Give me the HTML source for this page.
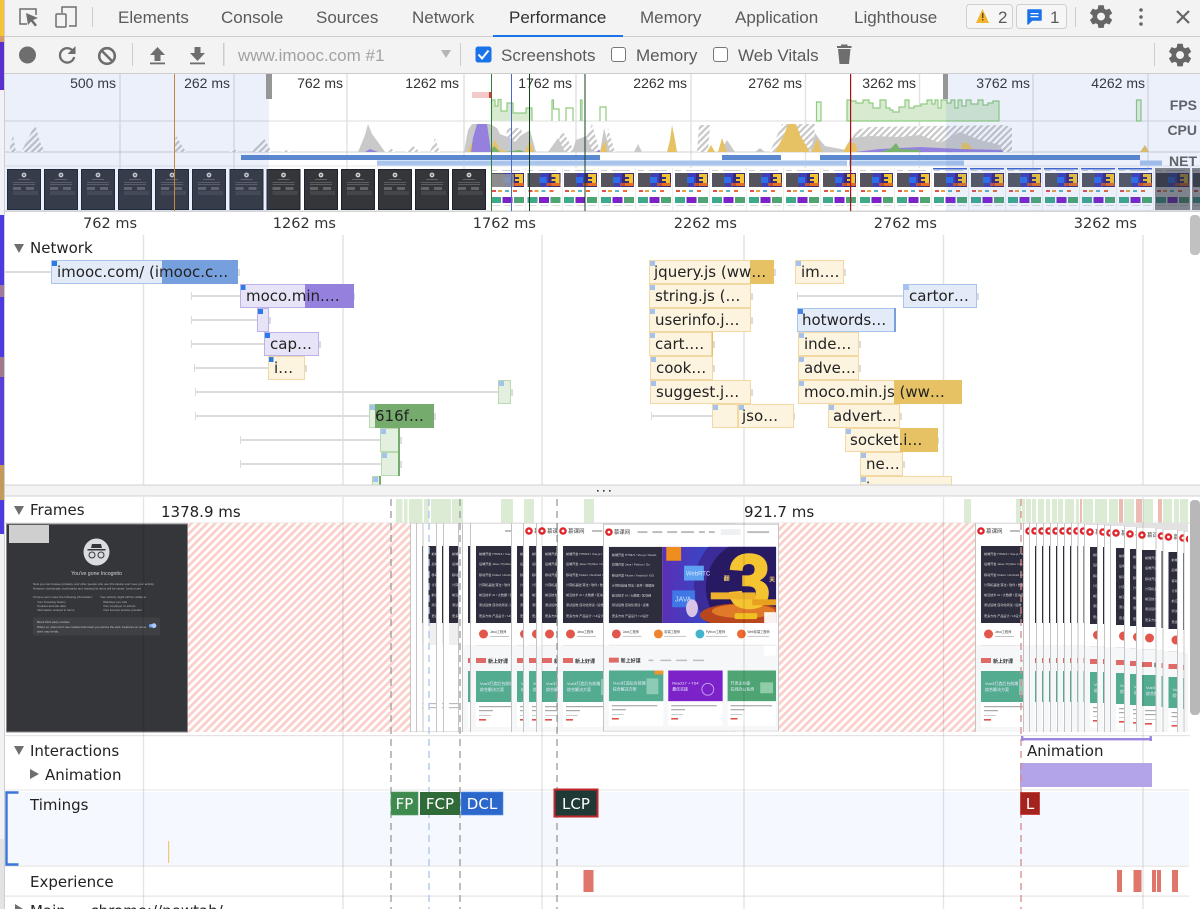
<!DOCTYPE html>
<html><head><meta charset="utf-8"><title>DevTools Performance</title>
<style>
html,body{margin:0;padding:0;background:#fff;width:1200px;height:909px;overflow:hidden}
svg{display:block}
#root{filter:blur(.35px)}
.t{font-family:"Liberation Sans","Noto Sans CJK SC",sans-serif;font-size:17px;fill:#5a5a5a}
.o{font-family:"Liberation Sans",sans-serif;font-size:14px;fill:#333;text-anchor:end}
.l{font-family:"DejaVu Sans","Noto Sans CJK SC",sans-serif;font-size:15px;fill:#222}
.r{font-family:"DejaVu Sans",sans-serif;font-size:14.5px;fill:#333;text-anchor:end}
.m{font-family:"DejaVu Sans",sans-serif;font-size:15px;fill:#fff;text-anchor:middle}
.lbl{font-family:"Liberation Sans",sans-serif;font-size:14px;font-weight:bold;fill:#5f6368;text-anchor:end}
.z{font-family:"Liberation Sans","Noto Sans CJK SC",sans-serif}
.w{fill:#dcdcdc}
.y{fill:#fdf4e0;stroke:#f2d9a4}
.yd{fill:#e6c264}
.g{fill:#e3efdf;stroke:#bad8b1}
.gd{fill:#75ab6c}
.b{fill:#e4ebf8;stroke:#a9c5ee}
.bd{fill:#769fdd}
.p{fill:#e8e4f7;stroke:#bdb0eb}
.pd{fill:#9580dd}
.mk{fill:#a3c2ee}
.mk2{fill:#2b7be6}
.gl{stroke:#e2e2e2;stroke-width:1.4}
.gk{stroke:#000;stroke-opacity:.1;stroke-width:1.4}
</style></head>
<body>
<svg id="root" xmlns="http://www.w3.org/2000/svg" width="1200" height="909" viewBox="0 0 1200 909">
<defs>
<pattern id="hr" width="5.6" height="5.6" patternUnits="userSpaceOnUse" patternTransform="rotate(45)"><rect width="5.6" height="5.6" fill="#fff"/><rect width="2.8" height="5.6" fill="#fbcfca"/></pattern>
<pattern id="hg" width="4.6" height="4.6" patternUnits="userSpaceOnUse" patternTransform="rotate(45)"><rect width="4.6" height="4.6" fill="#fff"/><rect width="2.3" height="4.6" fill="#c9c9c9"/></pattern>
<linearGradient id="bn" x1="0" y1="0" x2="1" y2="0"><stop offset="0" stop-color="#5a2fb5"/><stop offset=".5" stop-color="#2f4ecb"/><stop offset="1" stop-color="#2f4ecb"/></linearGradient>
<clipPath id="bc"><rect x="60" y="23" width="115" height="77"/></clipPath>

<symbol id="pg" width="178" height="209" viewBox="0 0 178 209">
<rect x=".5" y="0" width="177" height="209" fill="#fff" stroke="#c4c4c4"/>
<rect x="1" y="122" width="176" height="87" fill="#f6f7f9"/>
<circle cx="6" cy="8" r="3.8" fill="#e0262c"/><circle cx="6" cy="8" r="1.4" fill="#fff"/>
<text x="11" y="10" class="z" font-size="5.5" fill="#444">慕课网</text>
<g fill="#bdbdbd"><rect x="35" y="7" width="10" height="2"/><rect x="50" y="7" width="10" height="2"/><rect x="65" y="7" width="10" height="2"/><rect x="79" y="7" width="13" height="2"/><rect x="97" y="7" width="6" height="2"/><rect x="107" y="7" width="6" height="2"/><rect x="119" y="5" width="20" height="6" fill="#eef0f3"/><rect x="146" y="7" width="22" height="2"/></g>
<rect x="6" y="23" width="54" height="77" fill="#2e2d3d"/>
<g class="z" font-size="3.1" fill="#d8d8d8"><text x="9" y="32">前端开发 HTML5 / Vue.js / React</text><text x="9" y="42">后端开发 Java / Python / Go</text><text x="9" y="53">移动开发 Flutter / Android / iOS</text><text x="9" y="63">计算机基础 算法 / 软件 / 数据库</text><text x="9" y="73">前沿技术 AI / 大数据 / 区块链</text><text x="9" y="83">测试运维 自动化测试 / 运维</text><text x="9" y="94">更多方向 产品设计 / UI设计</text></g>
<rect x="60" y="23" width="115" height="77" fill="url(#bn)"/>
<g clip-path="url(#bc)">
<circle cx="152" cy="62" r="60" fill="#3c2c99"/><circle cx="152" cy="64" r="48" fill="#271a62"/>
<rect x="70" y="67" width="23" height="17" fill="#3f78e6"/><rect x="82" y="42" width="20" height="15" fill="#5ea0f2"/>
<text x="84" y="52" class="z" font-size="6" fill="#cfe3ff">WebRTC</text><text x="73" y="78" class="z" font-size="7" fill="#cfe3ff">JAVA</text>
<ellipse cx="142" cy="92" rx="44" ry="12" fill="#b8471e"/><ellipse cx="142" cy="88" rx="32" ry="7" fill="#e07a28"/>
<text x="148" y="84" text-anchor="middle" class="z" font-size="76" font-weight="bold" fill="#f5c431" stroke="#f5c431" stroke-width="2.5">3</text>
<text x="122" y="57" class="z" font-size="6" font-weight="bold" fill="#f7d36a">翻</text><text x="168" y="58" class="z" font-size="6" font-weight="bold" fill="#f7d36a">天</text>
<rect x="109" y="69" width="45" height="7" fill="#efb02c"/>
<rect x="151" y="76" width="24" height="6" fill="#e8a020"/>
<rect x="133" y="90" width="23" height="6" rx="2" fill="#f0c020"/>
<ellipse cx="90" cy="85" rx="6" ry="9" fill="#d9c4e8"/>
<rect x="64" y="23" width="15" height="14" fill="#ef8e1e"/>
</g>
<rect x="163" y="89" width="12" height="44" fill="#fff" opacity=".92"/>
<rect x="6" y="100" width="169" height="22" fill="#fff"/><rect x="6" y="122" width="169" height=".8" fill="#e3e3e3"/>
<circle cx="13.5" cy="111" r="4.5" fill="#e2574c"/><circle cx="56" cy="111" r="4.5" fill="#ee8432"/><circle cx="98" cy="111" r="4.5" fill="#43b5cb"/><circle cx="140" cy="111" r="4.5" fill="#ee6a32"/>
<g class="z" font-size="3.2" fill="#444"><text x="20" y="110">Java工程师</text><text x="62" y="110">前端工程师</text><text x="104" y="110">Python工程师</text><text x="146" y="110">Web前端工程师</text></g>
<g fill="#c4c4c4"><rect x="20" y="113" width="19" height="1"/><rect x="62" y="113" width="22" height="1"/><rect x="104" y="113" width="22" height="1"/><rect x="146" y="113" width="22" height="1"/></g>
<rect x="6" y="135" width="10" height="5" fill="#de6b68"/><text x="18" y="140" class="z" font-size="5" font-weight="bold" fill="#333">新上好课</text>
<g fill="#bcbcbc"><rect x="46" y="137" width="5" height="1.5"/><rect x="58" y="137" width="11" height="1.5"/><rect x="74" y="137" width="11" height="1.5"/><rect x="91" y="137" width="11" height="1.5"/></g>
<rect x="6" y="148" width="55" height="56" fill="#fff"/><rect x="66" y="148" width="55" height="56" fill="#fff"/><rect x="126" y="148" width="49" height="56" fill="#fff"/>
<rect x="6" y="148" width="55" height="31" fill="#53ab90"/><rect x="66" y="148" width="55" height="31" fill="#7b22c9"/><rect x="126" y="148" width="49" height="31" fill="#4ea573"/>
<rect x="52" y="148" width="9" height="4" fill="#ee9632"/>
<g class="z" font-size="4" fill="#eef"><text x="10" y="162">Vue3打造后台前端</text><text x="10" y="168">综合解决方案</text><text x="70" y="162">React17 + TS4</text><text x="70" y="168">最佳实践</text><text x="129" y="162">开发企业级</text><text x="129" y="168">在线办公系统</text></g>
<rect x="44" y="156" width="12" height="16" fill="#8cccb6"/><circle cx="106" cy="167" r="6" fill="none" stroke="#c89bee"/><rect x="159" y="160" width="13" height="11" fill="#90cca8"/>
<g fill="#a9a9a9"><rect x="9" y="183" width="46" height="1.2"/><rect x="9" y="187" width="14" height="1.2"/><rect x="69" y="183" width="46" height="1.2"/><rect x="69" y="187" width="14" height="1.2"/><rect x="129" y="183" width="42" height="1.2"/><rect x="129" y="187" width="14" height="1.2"/><rect x="9" y="192" width="12" height="1" fill="#ccc"/><rect x="69" y="192" width="12" height="1" fill="#ccc"/><rect x="129" y="192" width="12" height="1" fill="#ccc"/></g>
<g fill="#e0514a"><rect x="9" y="196" width="7" height="1.6"/><rect x="69" y="196" width="7" height="1.6"/><rect x="129" y="196" width="7" height="1.6"/></g>
</symbol>

<symbol id="pg0" width="178" height="209" viewBox="0 0 178 209">
<rect x=".5" y="0" width="177" height="209" fill="#fff" stroke="#c4c4c4"/>
<rect x="6" y="23" width="54" height="77" fill="#2e2d3d"/>
<g class="z" font-size="3.1" fill="#d8d8d8"><text x="9" y="32">前端开发</text><text x="9" y="42">后端开发</text><text x="9" y="53">移动开发</text><text x="9" y="63">计算机基础</text><text x="9" y="73">前沿技术</text><text x="9" y="83">测试运维</text><text x="9" y="94">更多方向</text></g>
<rect x="6" y="100" width="169" height="22" fill="#efefef"/>
<rect x="35" y="7" width="10" height="2" fill="#bdbdbd"/>
<rect x="6" y="180" width="30" height="1.200" fill="#bbb"/><rect x="6" y="184" width="30" height="1.200" fill="#bbb"/>
</symbol>

<symbol id="dt" width="34" height="41" viewBox="0 0 34 41">
<rect width="34" height="41" fill="#35363a"/><rect x=".5" y=".5" width="33" height="40" fill="none" stroke="#1d2230"/>
<circle cx="17" cy="6" r="2.4" fill="#cfcfcf"/><circle cx="17" cy="6" r=".9" fill="#444"/>
<g fill="#777"><rect x="11" y="10" width="12" height=".7"/><rect x="6" y="13" width="22" height=".6"/><rect x="6" y="15" width="22" height=".6"/><rect x="6" y="18" width="8" height="3" opacity=".7"/><rect x="19" y="18" width="8" height="3" opacity=".7"/></g><rect x="6" y="22" width="25" height="4" fill="#45464b"/>
</symbol>

<symbol id="th" width="36" height="42" viewBox="0 0 36 42">
<rect width="35.5" height="42" fill="#fff"/><rect x="35.5" width=".5" height="42" fill="#ddd"/>
<g fill="#cfcfcf"><rect x="1" y="2" width="6" height="1"/><rect x="12" y="2" width="18" height="1"/></g>
<rect x="1" y="5" width="13" height="14" fill="#55545e"/>
<rect x="14" y="5" width="20" height="14" fill="#3f3eb4"/><rect x="22" y="5" width="12" height="14" fill="#3a2a7c"/><rect x="13" y="9" width="7" height="6" fill="#2f6ee8"/>
<path d="M25 6h8v12h-8v-3h4v-2h-4v-2h4V9h-4z" fill="#f2c430"/><rect x="20" y="15" width="14" height="3" fill="#e05a20" opacity=".8"/>
<rect x="2" y="22" width="4" height="2" fill="#e0514a"/><rect x="8" y="22" width="4" height="2" fill="#e8a040"/><rect x="15" y="22" width="4" height="2" fill="#59b6c8"/><rect x="23" y="22" width="4" height="2" fill="#ea6a3c"/>
<rect x="1" y="29" width="10" height="6" fill="#3fa98c"/><rect x="12.5" y="29" width="10" height="6" fill="#7b22c9"/><rect x="24" y="29" width="10" height="6" fill="#4ea573"/>
<g fill="#ddd"><rect x="2" y="37" width="8" height="1"/><rect x="14" y="37" width="8" height="1"/><rect x="25" y="37" width="8" height="1"/></g>
</symbol>

<path id="gear" d="M19.43 12.98c.04-.32.07-.64.07-.98s-.03-.66-.07-.98l2.11-1.65c.19-.15.24-.42.12-.64l-2-3.46c-.12-.22-.39-.3-.61-.22l-2.49 1c-.52-.4-1.08-.73-1.69-.98l-.38-2.65C14.46 2.18 14.25 2 14 2h-4c-.25 0-.46.18-.49.42l-.38 2.65c-.61.25-1.17.59-1.69.98l-2.49-1c-.23-.09-.49 0-.61.22l-2 3.46c-.13.22-.07.49.12.64l2.11 1.65c-.04.32-.07.65-.07.98s.03.66.07.98l-2.11 1.65c-.19.15-.24.42-.12.64l2 3.46c.12.22.39.3.61.22l2.49-1c.52.4 1.08.73 1.69.98l.38 2.65c.03.24.24.42.49.42h4c.25 0 .46-.18.49-.42l.38-2.65c.61-.25 1.17-.59 1.69-.98l2.49 1c.23.09.49 0 .61-.22l2-3.46c.12-.22.07-.49-.12-.64l-2.11-1.65zM12 15.5c-1.93 0-3.5-1.57-3.5-3.5s1.57-3.5 3.5-3.5 3.5 1.57 3.5 3.5-1.57 3.5-3.5 3.5z"/>
</defs>

<rect width="1200" height="909" fill="#fff"/>

<!-- header tabs -->
<rect width="1200" height="37" fill="#f3f3f3"/><rect y="36" width="1200" height="1" fill="#ccc"/>
<g fill="none" stroke="#6e6e6e" stroke-width="1.5"><path d="M27 24h-7V9h16v6"/></g><path d="M26 13l12 5-5 2 4 5-2 1.5-4-5-3 3.5z" fill="#6e6e6e"/>
<g fill="none" stroke="#6e6e6e" stroke-width="1.5"><path d="M62 13V7h14v19H69"/><rect x="56" y="14" width="10" height="13" rx="1"/></g>
<rect x="92" y="7" width="1" height="20" fill="#ccc"/>
<text x="118" y="23" class="t">Elements</text><text x="221" y="23" class="t">Console</text><text x="316" y="23" class="t">Sources</text><text x="412" y="23" class="t">Network</text><text x="509" y="23" class="t" style="fill:#333">Performance</text><text x="640" y="23" class="t">Memory</text><text x="735" y="23" class="t">Application</text><text x="854" y="23" class="t">Lighthouse</text>
<rect x="493" y="35" width="130" height="2" fill="#1a73e8"/>
<rect x="966.500" y="4.500" width="46" height="24" rx="3" fill="#f6f6f6" stroke="#cfcfcf"/>
<path d="M982.500 9l6.500 14h-13z" fill="#f3b32a"/><rect x="982" y="13" width="1.400" height="5" fill="#5a4a1a"/><rect x="982" y="19" width="1.400" height="1.500" fill="#5a4a1a"/>
<text x="998" y="23" class="t">2</text>
<rect x="1016.500" y="4.500" width="50" height="24" rx="3" fill="#f6f6f6" stroke="#cfcfcf"/>
<path d="M1028 10h13v10h-9l-4 4z" fill="#1a73e8" stroke="#1a73e8" stroke-width="1.500" stroke-linejoin="round"/><rect x="1030.500" y="13" width="8" height="1.300" fill="#fff"/><rect x="1030.500" y="16" width="8" height="1.300" fill="#fff"/>
<text x="1050" y="23" class="t">1</text>
<rect x="1075" y="7" width="1" height="20" fill="#ccc"/>
<use href="#gear" transform="translate(1087.500,3) scale(1.130)" fill="#666"/>
<circle cx="1141" cy="10" r="1.800" fill="#666"/><circle cx="1141" cy="17" r="1.800" fill="#666"/><circle cx="1141" cy="24" r="1.800" fill="#666"/>
<path d="M1177 11l12 12M1189 11l-12 12" stroke="#666" stroke-width="2.200"/>

<!-- toolbar -->
<rect y="37" width="1200" height="36" fill="#f3f3f3"/><rect y="73" width="1200" height="1" fill="#ccc"/>
<circle cx="27.500" cy="55" r="8.500" fill="#6e6e6e"/>
<path d="M74 53a7.200 7.200 0 1 0 .2 4" fill="none" stroke="#6e6e6e" stroke-width="2.300"/><path d="M75.500 46v8h-8z" fill="#6e6e6e"/>
<circle cx="107" cy="56" r="7.800" fill="none" stroke="#6e6e6e" stroke-width="2.600"/><path d="M101.500 50.500l11 11" stroke="#6e6e6e" stroke-width="2.600"/>
<rect x="132" y="43" width="1" height="23" fill="#ccc"/>
<path d="M157.500 47l7.500 8h-4.500v6h-6v-6H150z" fill="#6e6e6e"/><rect x="150" y="62.500" width="15" height="1.800" fill="#6e6e6e"/>
<path d="M194.500 47h6v6h4.500l-7.500 8-7.500-8h4.500z" fill="#6e6e6e"/><rect x="190" y="62.500" width="15" height="1.800" fill="#6e6e6e"/>
<rect x="223" y="43" width="1.500" height="23" fill="#ccc"/>
<text x="238" y="61" class="t" style="fill:#a2a2a2">www.imooc.com #1</text>
<path d="M441 50h10l-5 8z" fill="#b5b5b5"/>
<rect x="460" y="43" width="1" height="23" fill="#ccc"/>
<rect x="475.500" y="46.500" width="16" height="16" rx="2.500" fill="#1a73e8"/><path d="M478.500 54.500l3.500 4 6.500-8" fill="none" stroke="#fff" stroke-width="2"/>
<text x="501" y="61" class="t">Screenshots</text>
<rect x="611.500" y="47.500" width="14" height="14" rx="2.500" fill="#fff" stroke="#777"/>
<text x="636" y="61" class="t">Memory</text>
<rect x="713.500" y="47.500" width="14" height="14" rx="2.500" fill="#fff" stroke="#777"/>
<text x="738" y="61" class="t">Web Vitals</text>
<path d="M838 49h12.500l-1.500 15h-9.500z" fill="#6e6e6e"/><rect x="837" y="46" width="14.500" height="2" fill="#6e6e6e"/><rect x="841" y="44.500" width="6.500" height="2" fill="#6e6e6e"/>
<rect x="1154" y="43" width="1" height="23" fill="#ccc"/>
<use href="#gear" transform="translate(1166.500,41.500) scale(1.130)" fill="#666"/>

<!-- overview -->
<rect x="5" y="74" width="1195" height="137" fill="#fff"/>
<g class="gl"><path d="M120 74V211M234 74V211M347 74V211M464 74V211M576 74V211M691 74V211M805.500 74V211M919.500 74V211M1033 74V211M1148 74V211"/></g>
<g class="o"><text x="116" y="88">500 ms</text><text x="230" y="88">262 ms</text><text x="343" y="88">762 ms</text><text x="459" y="88">1262 ms</text><text x="572" y="88">1762 ms</text><text x="687" y="88">2262 ms</text><text x="802" y="88">2762 ms</text><text x="916" y="88">3262 ms</text><text x="1030" y="88">3762 ms</text><text x="1145" y="88">4262 ms</text></g>
<rect x="472" y="92" width="18" height="6" fill="#f3c9c9"/><rect x="489" y="92" width="2" height="6" fill="#ee3030"/>
<rect x="5" y="120.500" width="1195" height="1" fill="#dcdcdc"/>
<rect x="5" y="151.500" width="1195" height="1" fill="#d0d0d0"/>
<rect x="5" y="165.500" width="1195" height="1" fill="#e8e8e8"/>
<!-- FPS -->
<path d="M491.500 121V100H495V106H498V99.500H501V111H507V103H513V113H525H526V108H532V121Z" fill="#d8ebd0"/>
<path d="M491.500 121V100H495V106H498V99.500H501V111H507V103H513V113H525H526V108H532V121" fill="none" stroke="#8fcb80" stroke-width="1.200"/>
<path d="M552 121V100H553.500V109H559V121M566 121V108H573V121M580.500 121V100H582V121M600 121V107H606V121" fill="#fff" stroke="#8fcb80" stroke-width="1.200"/>
<path d="M816.500 121V102H821V121Z" fill="#e8f3e3" stroke="#8fcb80" stroke-width="1.200"/>
<path d="M847 121V100H851V101H856V103H863V100H869V103H873V108H880V100H886V108H890V110H893V112H899V107H905V100H909V108H914V106H921V104H927V100H932V104H935V100H938V108H941V100H947V103H951V100H955V108H958V100H962V106H966V100H971V104H978V100H983V105H988V103H993V101H999V121Z" fill="#d8ebd0" stroke="#8fcb80" stroke-width="1.200"/>
<path d="M1136.500 121V100H1141V121Z" fill="#e8f3e3" stroke="#8fcb80" stroke-width="1.200"/>
<!-- CPU hatch -->
<g fill="url(#hg)">
<path d="M9 152L13 135 16 152ZM21 152L27 141 35 124 40 142 45 152ZM173 152L176 136 186 152ZM229 152L233 148 238 152ZM252 152L263 137 272 152ZM282 152L285 150 292 152ZM385 152L390 147 395 152ZM405 152L412 145 420 152ZM430 152L435 138 440 152ZM505 152L507 128 520 128 535 152ZM555 152L562 130 575 152ZM580 152L592 124 600 152ZM605 152L608 128 615 152ZM697 152L699 125 710 125 708 152ZM770 152L782 124 815 124 812 152ZM846 152L856 130 870 127 1005 125 1012 128 1012 152Z"/>
</g>
<!-- CPU gray -->
<path d="M358 152L365 135 368 124 372 134 378 142 385 152ZM464 152L468 130 472 124 490 124 497 128 500 134 510 138 515 142 520 136 530 130 536 152ZM548 152L558 138 565 152ZM572 152L576 140 586 136 592 150 596 152ZM634 152L638 144 642 152ZM600 152L604 128 610 152ZM720 152L727 140 735 152ZM755 152L760 148 765 152ZM810 152L815 133 820 140 825 146 846 150 850 138 870 136 900 137 920 135 940 143 960 132 980 140 1000 145 1003 152Z" fill="#c9c9c9"/>
<!-- CPU colour -->
<path d="M468 152L472 142 476 152ZM489 152L495 140 500 150 510 152ZM525 152L530 140 534 152ZM600 152L605 140 607 152ZM667 152L670 140 672 125 675 140 677 152ZM707 152L711 145 715 152ZM718 152L722 138 727 152ZM775 152L784 135 788 124 796 124 800 135 810 152ZM812 152L817 138 822 152ZM843 152L848 143 855 143 858 152ZM960 152L962 143 968 143 975 152ZM1135 152L1140 152 1145 145 1149 152Z" fill="#e6c264"/>
<path d="M471 152L473 138 477 124H487L489 138 491 152ZM595 152L600 150V152ZM855 152L880 149 900 148 920 147 960 149 1002 150 1003 152ZM365 152L370 149 378 152Z" fill="#9580dd"/>
<path d="M490 152L494 146 500 152ZM505 152L520 150 525 152ZM880 152L890 149 896 143 900 149 920 150 920 152Z" fill="#79b26f"/>
<!-- NET -->
<rect x="241" y="155" width="359" height="5" fill="#5c88cf"/><rect x="722" y="155" width="59" height="5" fill="#5c88cf"/><rect x="820" y="155" width="320" height="5" fill="#5c88cf"/>
<rect x="377" y="160.500" width="470" height="5" fill="#a9c5ee"/><rect x="849" y="160.500" width="115" height="5" fill="#a9c5ee"/><rect x="1140" y="160.500" width="22" height="5" fill="#a9c5ee"/>
<!-- filmstrip -->
<g>
<use href="#dt" x="7" y="169"/><use href="#dt" x="44" y="169"/><use href="#dt" x="81" y="169"/><use href="#dt" x="118" y="169"/><use href="#dt" x="155" y="169"/><use href="#dt" x="192" y="169"/><use href="#dt" x="229.500" y="169"/><use href="#dt" x="266.500" y="169"/><use href="#dt" x="304" y="169"/><use href="#dt" x="341" y="169"/><use href="#dt" x="378" y="169"/><use href="#dt" x="415" y="169"/><use href="#dt" x="452" y="169"/>
<use href="#th" x="490" y="168"/><use href="#th" x="526.500" y="168"/><use href="#th" x="563" y="168"/><use href="#th" x="600" y="168"/><use href="#th" x="637" y="168"/><use href="#th" x="674" y="168"/><use href="#th" x="711" y="168"/><use href="#th" x="748" y="168"/><use href="#th" x="785" y="168"/><use href="#th" x="822" y="168"/><use href="#th" x="859" y="168"/><use href="#th" x="896" y="168"/><use href="#th" x="933" y="168"/><use href="#th" x="970" y="168"/><use href="#th" x="1007" y="168"/><use href="#th" x="1044" y="168"/><use href="#th" x="1081" y="168"/><use href="#th" x="1118" y="168"/><use href="#th" x="1155" y="168"/>
</g>
<rect x="491" y="174" width="23" height="13" fill="#9b9b9b" opacity=".8"/>
<g fill="#2a55c8" opacity=".9"><rect x="933" y="168" width="34" height="1.500"/><rect x="970" y="168" width="34" height="1.500"/><rect x="1007" y="168" width="34" height="1.500"/><rect x="1044" y="168" width="34" height="1.500"/><rect x="1081" y="168" width="34" height="1.500"/><rect x="1118" y="168" width="34" height="1.500"/></g>
<rect x="1155" y="168" width="35" height="42" fill="#222" opacity=".55"/>
<use href="#th" x="1192" y="168"/><rect x="1192" y="168" width="8" height="42" fill="#222" opacity=".55"/>
<rect x="5" y="210.500" width="1195" height="1.500" fill="#d4d4d4"/>
<!-- overview vertical lines -->
<rect x="174" y="74" width="1" height="137" fill="#d68a24"/>
<rect x="491" y="74" width="1" height="137" fill="#2f7d3a"/><rect x="511" y="74" width="1" height="137" fill="#4a6cc6"/><rect x="529" y="74" width="1" height="137" fill="#14401e"/><rect x="584.500" y="74" width="1" height="137" fill="#14401e"/><rect x="850" y="74" width="1.200" height="137" fill="#a41414"/>
<!-- selection overlays -->
<rect x="5" y="74" width="264" height="137" fill="#3f6fd0" opacity=".105"/><rect x="946" y="74" width="254" height="137" fill="#3f6fd0" opacity=".105"/>
<rect x="266" y="74" width="6" height="25" fill="#969696"/><rect x="943" y="74" width="5" height="25" fill="#969696"/>
<text x="1197" y="110" class="lbl">FPS</text><text x="1197" y="135" class="lbl">CPU</text><text x="1197" y="166" class="lbl">NET</text>

<!-- network panel -->
<g class="gl"><path d="M143.500 235V485M343 235V485M542 235V485M744 235V485M943.500 235V485M1143 235V485"/></g>
<g class="r"><text x="137" y="228">762 ms</text><text x="336" y="228">1262 ms</text><text x="536" y="228">1762 ms</text><text x="737" y="228">2262 ms</text><text x="937" y="228">2762 ms</text><text x="1137" y="228">3262 ms</text></g>
<path d="M14 244h10l-5 9z" fill="#6e6e6e"/><text x="30" y="253" class="l">Network</text>
<!-- whiskers -->
<g class="w"><rect x="5" y="271" width="46" height="2"/><rect x="191" y="295" width="49" height="2"/><rect x="191" y="319" width="66" height="2"/><rect x="191" y="343" width="73" height="2"/><rect x="194" y="367" width="74" height="2"/><rect x="195" y="391" width="303" height="2"/><rect x="195" y="415" width="174" height="2"/><rect x="240" y="439" width="140" height="2"/><rect x="240" y="463" width="141" height="2"/><rect x="651" y="415" width="61" height="2"/><rect x="797" y="295" width="106" height="2"/>
<rect x="191" y="292" width="1" height="8"/><rect x="191" y="316" width="1" height="8"/><rect x="191" y="340" width="1" height="8"/><rect x="194" y="364" width="1" height="8"/><rect x="195" y="388" width="1" height="8"/><rect x="195" y="412" width="1" height="8"/><rect x="240" y="436" width="1" height="8"/><rect x="240" y="460" width="1" height="8"/><rect x="651" y="412" width="1" height="8"/><rect x="797" y="292" width="1" height="8"/>
<rect x="238" y="269" width="2" height="7"/><rect x="353" y="293" width="2" height="7"/><rect x="269" y="317" width="2" height="7"/><rect x="319" y="341" width="2" height="7"/><rect x="305" y="365" width="2" height="7"/><rect x="511" y="389" width="2" height="7"/><rect x="434" y="413" width="2" height="7"/><rect x="400" y="437" width="2" height="7"/><rect x="400" y="461" width="2" height="7"/><rect x="774" y="269" width="2" height="7"/><rect x="751" y="293" width="2" height="7"/><rect x="751" y="317" width="2" height="7"/><rect x="713" y="341" width="2" height="7"/><rect x="713" y="365" width="2" height="7"/><rect x="751" y="389" width="2" height="7"/><rect x="793" y="413" width="2" height="7"/><rect x="844" y="269" width="2" height="7"/><rect x="977" y="293" width="2" height="7"/><rect x="859" y="341" width="2" height="7"/><rect x="859" y="365" width="2" height="7"/><rect x="900" y="413" width="2" height="7"/><rect x="937" y="437" width="2" height="7"/><rect x="903" y="461" width="2" height="7"/></g>
<!-- left bars -->
<rect x="51.500" y="260.500" width="186" height="23" class="b"/><rect x="162" y="260" width="76" height="24" class="bd"/>
<rect x="240.500" y="284.500" width="113" height="23" class="p"/><rect x="305" y="284" width="49" height="24" class="pd"/>
<rect x="257.500" y="308.500" width="11" height="23" class="p"/>
<rect x="264.500" y="332.500" width="54" height="23" class="p"/>
<rect x="268.500" y="356.500" width="36" height="23" class="y"/>
<rect x="498.500" y="380.500" width="12" height="23" class="g"/>
<rect x="369.500" y="404.500" width="64" height="23" class="g"/><rect x="375" y="404" width="59" height="24" class="gd"/>
<rect x="380.500" y="428.500" width="19" height="23" class="g"/><rect x="398" y="428" width="2" height="24" class="gd"/>
<rect x="381.500" y="452.500" width="18" height="23" class="g"/><rect x="398" y="452" width="2" height="24" class="gd"/>
<rect x="372.500" y="476.500" width="8" height="10" class="g"/><rect x="379" y="476" width="2" height="10" class="gd"/>
<g class="mk2"><rect x="52" y="261" width="5" height="5"/><rect x="241" y="285" width="4.500" height="5"/><rect x="258" y="309" width="5" height="5"/><rect x="265" y="333" width="5" height="5"/><rect x="269" y="357" width="4.500" height="5"/></g>
<g class="mk"><rect x="499" y="381" width="5" height="5"/><rect x="370" y="405" width="5" height="5"/><rect x="381" y="429" width="5" height="5"/><rect x="382" y="453" width="5" height="5"/><rect x="373" y="477" width="5" height="5"/></g>
<g class="l"><text x="57" y="277">imooc.com/ (imooc.c…</text><text x="246" y="301">moco.min.…</text><text x="270" y="349">cap…</text><text x="274" y="373">i…</text><text x="375" y="421">616f…</text></g>
<!-- right bars -->
<rect x="649.500" y="260.500" width="124" height="23" class="y"/><rect x="750" y="260" width="24" height="24" class="yd"/>
<rect x="649.500" y="284.500" width="101" height="23" class="y"/><rect x="649.500" y="308.500" width="101" height="23" class="y"/><rect x="649.500" y="332.500" width="63" height="23" class="y"/><rect x="711.500" y="332" width="1.500" height="24" class="yd"/><rect x="650.500" y="356.500" width="62" height="23" class="y"/><rect x="650.500" y="380.500" width="100" height="23" class="y"/><rect x="712.500" y="404.500" width="25" height="23" class="y"/><rect x="738.500" y="404.500" width="55" height="23" class="y"/>
<rect x="795.500" y="260.500" width="48" height="23" class="y"/>
<rect x="903.500" y="284.500" width="73" height="23" class="b"/>
<rect x="797.500" y="308.500" width="98" height="23" class="b"/><rect x="894" y="308" width="2" height="24" class="bd"/>
<rect x="798.500" y="332.500" width="60" height="23" class="y"/><rect x="798.500" y="356.500" width="60" height="23" class="y"/>
<rect x="798.500" y="380.500" width="163" height="23" class="y"/><rect x="894" y="380" width="68" height="24" class="yd"/>
<rect x="828.500" y="404.500" width="71" height="23" class="y"/>
<rect x="845.500" y="428.500" width="92" height="23" class="y"/><rect x="900" y="428" width="38" height="24" class="yd"/>
<rect x="860.500" y="452.500" width="42" height="23" class="y"/>
<rect x="860.500" y="476.500" width="91" height="14" class="y"/>
<g class="mk"><rect x="650" y="261" width="5" height="5"/><rect x="650" y="285" width="5" height="5"/><rect x="650" y="309" width="5" height="5"/><rect x="650" y="333" width="5" height="5"/><rect x="651" y="357" width="5" height="5"/><rect x="651" y="381" width="5" height="5"/><rect x="713" y="405" width="5" height="5"/><rect x="739" y="405" width="5" height="5"/><rect x="796" y="261" width="5" height="5"/><rect x="904" y="285" width="5" height="5"/><rect x="799" y="333" width="5" height="5"/><rect x="799" y="357" width="5" height="5"/><rect x="799" y="381" width="5" height="5"/><rect x="829" y="405" width="5" height="5"/><rect x="846" y="429" width="5" height="5"/><rect x="861" y="453" width="5" height="5"/><rect x="861" y="477" width="5" height="5"/></g>
<rect x="798" y="309" width="5" height="5" fill="#4a86e0"/>
<g class="l"><text x="654" y="277">jquery.js (ww…</text><text x="655" y="301">string.js (…</text><text x="655" y="325">userinfo.j…</text><text x="655" y="349">cart.…</text><text x="656" y="373">cook…</text><text x="656" y="397">suggest.j…</text><text x="742" y="421">jso…</text><text x="801" y="277">im.…</text><text x="909" y="301">cartor…</text><text x="802" y="325">hotwords…</text><text x="804" y="349">inde…</text><text x="804" y="373">adve…</text><text x="804" y="397">moco.min.js (ww…</text><text x="833" y="421">advert…</text><text x="850" y="445">socket.i…</text><text x="866" y="469">ne…</text><text x="866" y="493">jquery.c…</text></g>
<rect x="1190" y="215" width="10" height="40" rx="4" fill="#c1c1c1"/>

<!-- divider -->
<rect x="5" y="485" width="1195" height="11" fill="#f3f3f3"/><rect x="5" y="484.500" width="1195" height="1" fill="#d0d0d0"/><rect x="5" y="495.500" width="1195" height="1" fill="#d0d0d0"/>
<g fill="#333"><rect x="597" y="490" width="1.600" height="1.600"/><rect x="603" y="490" width="1.600" height="1.600"/><rect x="609" y="490" width="1.600" height="1.600"/></g>

<!-- frames -->
<rect x="5" y="497" width="1195" height="412" fill="#fff"/>
<path d="M14 506h10l-5 9z" fill="#6e6e6e"/><text x="30" y="515" class="l">Frames</text>
<text x="161" y="517" class="l">1378.9 ms</text><text x="744" y="517" class="l">921.7 ms</text>
<g fill="#dcecd4"><rect x="396" y="499" width="6.500" height="24"/><rect x="404" y="499" width="3.500" height="24"/><rect x="409" y="499" width="13.500" height="24"/><rect x="424" y="499" width="5" height="24"/><rect x="431" y="499" width="20" height="24"/><rect x="452" y="499" width="11" height="24"/><rect x="501" y="499" width="12" height="24"/><rect x="524" y="499" width="10" height="24"/><rect x="584" y="499" width="10" height="24"/><rect x="964" y="499" width="7" height="24"/><rect x="1016" y="499" width="5" height="24"/><rect x="1022" y="499" width="3" height="24"/><rect x="1026" y="499" width="5" height="24"/><rect x="1032" y="499" width="4" height="24"/><rect x="1038" y="499" width="6" height="24"/><rect x="1046" y="499" width="4" height="24"/><rect x="1052" y="499" width="5" height="24"/><rect x="1058" y="499" width="5" height="24"/><rect x="1065" y="499" width="9" height="24"/><rect x="1076" y="499" width="3" height="24"/><rect x="1083" y="499" width="10" height="24"/><rect x="1095" y="499" width="12" height="24"/><rect x="1109" y="499" width="9" height="24"/><rect x="1124" y="499" width="10" height="24"/><rect x="1143" y="499" width="10" height="24"/><rect x="1163" y="499" width="9" height="24"/><rect x="1174" y="499" width="5" height="24"/><rect x="1180" y="499" width="8" height="24"/></g>
<g fill="#ecbcb4"><rect x="1080" y="499" width="2" height="24"/><rect x="1119" y="499" width="4" height="24"/><rect x="1136" y="499" width="6" height="24"/><rect x="1158" y="499" width="4" height="24"/></g>
<rect x="5" y="522.500" width="1185" height="1" fill="#e0e0e0"/>

<!-- hatch -->
<rect x="187" y="523" width="224" height="209" fill="url(#hr)"/>
<rect x="778" y="523" width="199" height="209" fill="url(#hr)"/>

<!-- incognito screenshot -->
<rect x="6.500" y="524" width="181" height="208" fill="#35363a" stroke="#888"/>
<rect x="9" y="525" width="40" height="18" fill="#cfcfcf"/>
<ellipse cx="96.500" cy="552" rx="13" ry="13.500" fill="#dadce0"/>
<path d="M91 548l1-4h9l1 4zM87.500 549h18v1.500h-18z" fill="#35363a"/><circle cx="92" cy="555" r="3" fill="none" stroke="#35363a"/><circle cx="101" cy="555" r="3" fill="none" stroke="#35363a"/>
<text x="96.500" y="575" text-anchor="middle" class="z" font-size="5.200" fill="#d5d5d5">You've gone Incognito</text>
<g class="z" font-size="3" fill="#b8b8b8"><text x="33" y="585">Now you can browse privately, and other people who use this device won't see your activity.</text><text x="33" y="589.500">However, downloads, bookmarks and reading list items will be saved. Learn more</text><text x="33" y="598">Chrome won't save the following information:</text><text x="100" y="598">Your activity might still be visible to:</text><text x="37" y="603">Your browsing history</text><text x="37" y="607">Cookies and site data</text><text x="37" y="611">Information entered in forms</text><text x="103" y="603">Websites you visit</text><text x="103" y="607">Your employer or school</text><text x="103" y="611">Your internet service provider</text></g>
<rect x="33" y="617.500" width="127" height="18" fill="#3f4044"/>
<g class="z" font-size="3" fill="#c4c4c4"><text x="37" y="623">Block third-party cookies</text><text x="37" y="628">When on, sites can't use cookies that track you across the web. Features on some</text><text x="37" y="632.500">sites may break.</text></g>
<rect x="149" y="624" width="7" height="3.500" rx="1.700" fill="#7aa7ee"/><circle cx="154" cy="625.700" r="2.400" fill="#a8c7fa"/>

<!-- page stacks -->
<svg x="0" y="523" width="1188" height="209" viewBox="0 523 1188 209">
<use href="#pg0" x="410" y="523"/><use href="#pg0" x="416" y="523"/><use href="#pg0" x="422.500" y="523"/><use href="#pg0" x="436" y="523"/><use href="#pg0" x="443" y="523"/><use href="#pg0" x="458" y="523"/>
<use href="#pg" x="462" y="523"/><rect x="463" y="525" width="8" height="14" fill="#fff"/>
<use href="#pg" x="470" y="523"/><rect x="471" y="525" width="30" height="14" fill="#fff"/>
<use href="#pg" x="511" y="523"/><rect x="512" y="525" width="11" height="14" fill="#fff"/>
<use href="#pg" x="523" y="523"/><use href="#pg" x="536" y="523"/><use href="#pg" x="557" y="523"/>
<use href="#pg" x="603" y="523" width="176"/>
<use href="#pg" x="975" y="523"/><use href="#pg" x="1023" y="523"/><use href="#pg" x="1029" y="523"/><use href="#pg" x="1036" y="523"/><use href="#pg" x="1043" y="523"/><use href="#pg" x="1050" y="523"/><use href="#pg" x="1057" y="523"/><use href="#pg" x="1064" y="523"/><use href="#pg" x="1071" y="523"/><use href="#pg" x="1077.500" y="523"/><use href="#pg" x="1084" y="524"/><use href="#pg" x="1097" y="524"/><use href="#pg" x="1104" y="525"/><use href="#pg" x="1110" y="525"/><use href="#pg" x="1124" y="526"/><use href="#pg" x="1136" y="527"/><use href="#pg" x="1155.500" y="528"/><use href="#pg" x="1162.500" y="529"/><use href="#pg" x="1177" y="530"/><use href="#pg" x="1183.500" y="531"/>
</svg>
<rect x="5" y="735" width="1185" height="1.200" fill="#e4e4e4"/>

<!-- lower rows -->
<rect x="5" y="789.500" width="1184" height="1" fill="#e4e4e4"/>
<rect x="5" y="792" width="1184" height="73" fill="#f5f8fe"/>
<rect x="5" y="865.500" width="1184" height="1.200" fill="#e4e4e4"/>
<rect x="5" y="895.500" width="1184" height="1.200" fill="#e4e4e4"/>
<path d="M18.500 792.500H6.500V864.500H18.500" fill="none" stroke="#3a75d8" stroke-width="2.400"/>
<g class="gk"><path d="M143.500 497V909M343 497V909M542 497V909M744 497V909M943.500 497V909M1143 497V909"/></g>

<path d="M14 746h10l-5 9z" fill="#6e6e6e"/><text x="30" y="756" class="l">Interactions</text>
<path d="M30 769l9 5-9 5z" fill="#6e6e6e"/><text x="45" y="780" class="l">Animation</text>
<text x="30" y="810" class="l">Timings</text>
<text x="30" y="887" class="l">Experience</text>
<path d="M15 904l8 5h-8z" fill="#6e6e6e"/><text x="30" y="916" class="l">Main — chrome://newtab/</text>

<rect x="1021" y="738" width="131" height="2.400" fill="#9a85e0"/><rect x="1021" y="736" width="2.400" height="5" fill="#9a85e0"/><rect x="1149.500" y="736" width="2.400" height="5" fill="#9a85e0"/>
<text x="1027" y="756" class="l">Animation</text>
<rect x="1020" y="763" width="132" height="24" fill="#b3a4e7"/>
<rect x="168" y="841" width="1.200" height="22" fill="#efc878"/>

<!-- dashed -->
<g fill="none" stroke-width="1.300" stroke-dasharray="7 5">
<path d="M391 499V909" stroke="#9a9a9a"/><path d="M429 499V909" stroke="#a9c3ea"/><path d="M460 499V909" stroke="#9a9a9a"/><path d="M557 499V909" stroke="#9a9a9a"/><path d="M1021 499V909" stroke="#d98a8a"/>
</g>

<!-- markers -->
<rect x="391" y="792" width="27" height="23" fill="#3f8a4e" stroke="#52a060" stroke-width=".6"/>
<rect x="420" y="792" width="40" height="23" fill="#2f6a38"/>
<rect x="461" y="792" width="42" height="23" fill="#2c68cc" stroke="#5a92e6" stroke-width=".6"/>
<rect x="554.500" y="789.500" width="43" height="27" fill="#1f3a36" stroke="#c0262a" stroke-width="2"/>
<rect x="1020.500" y="792.500" width="19" height="22" fill="#a5231f" stroke="#c44840"/>
<text x="404.500" y="809" class="m">FP</text><text x="440" y="809" class="m">FCP</text><text x="482" y="809" class="m">DCL</text><text x="576" y="809" class="m">LCP</text><text x="1030" y="809" class="m">L</text>
<g fill="#e0766a"><rect x="583.500" y="870" width="10" height="22"/><rect x="1117" y="870" width="5" height="22"/><rect x="1133.500" y="870" width="8" height="22"/><rect x="1152" y="870" width="4" height="22"/><rect x="1157" y="870" width="4" height="22"/><rect x="1172" y="870" width="6" height="22"/></g>

<rect x="1190" y="500" width="10" height="215" rx="4" fill="#b8b8b8"/>

<!-- left strip of underlying page -->
<rect x="0" y="0" width="4" height="36" fill="#f3c338"/><rect x="0" y="36" width="4" height="6" fill="#d99a6a"/><rect x="0" y="42" width="4" height="48" fill="#5a2fd0"/><rect x="0" y="90" width="4" height="125" fill="#f3f1f8"/>
<rect x="0" y="215" width="4" height="70" fill="#4d3ae0"/><rect x="0" y="285" width="4" height="12" fill="#a07a9a"/><rect x="0" y="297" width="4" height="60" fill="#4d3ae0"/><rect x="0" y="357" width="4" height="20" fill="#a07a8a"/><rect x="0" y="377" width="4" height="88" fill="#5a3fd8"/><rect x="0" y="465" width="4" height="35" fill="#c49a5a"/><rect x="0" y="500" width="4" height="34" fill="#4d3ae0"/><rect x="0" y="534" width="4" height="305" fill="#f2f1f4"/><rect x="0" y="839" width="4" height="70" fill="#e3e3e3"/>
<rect x="4" y="0" width="1" height="909" fill="#cfcfcf"/>
</svg>
</body></html>
